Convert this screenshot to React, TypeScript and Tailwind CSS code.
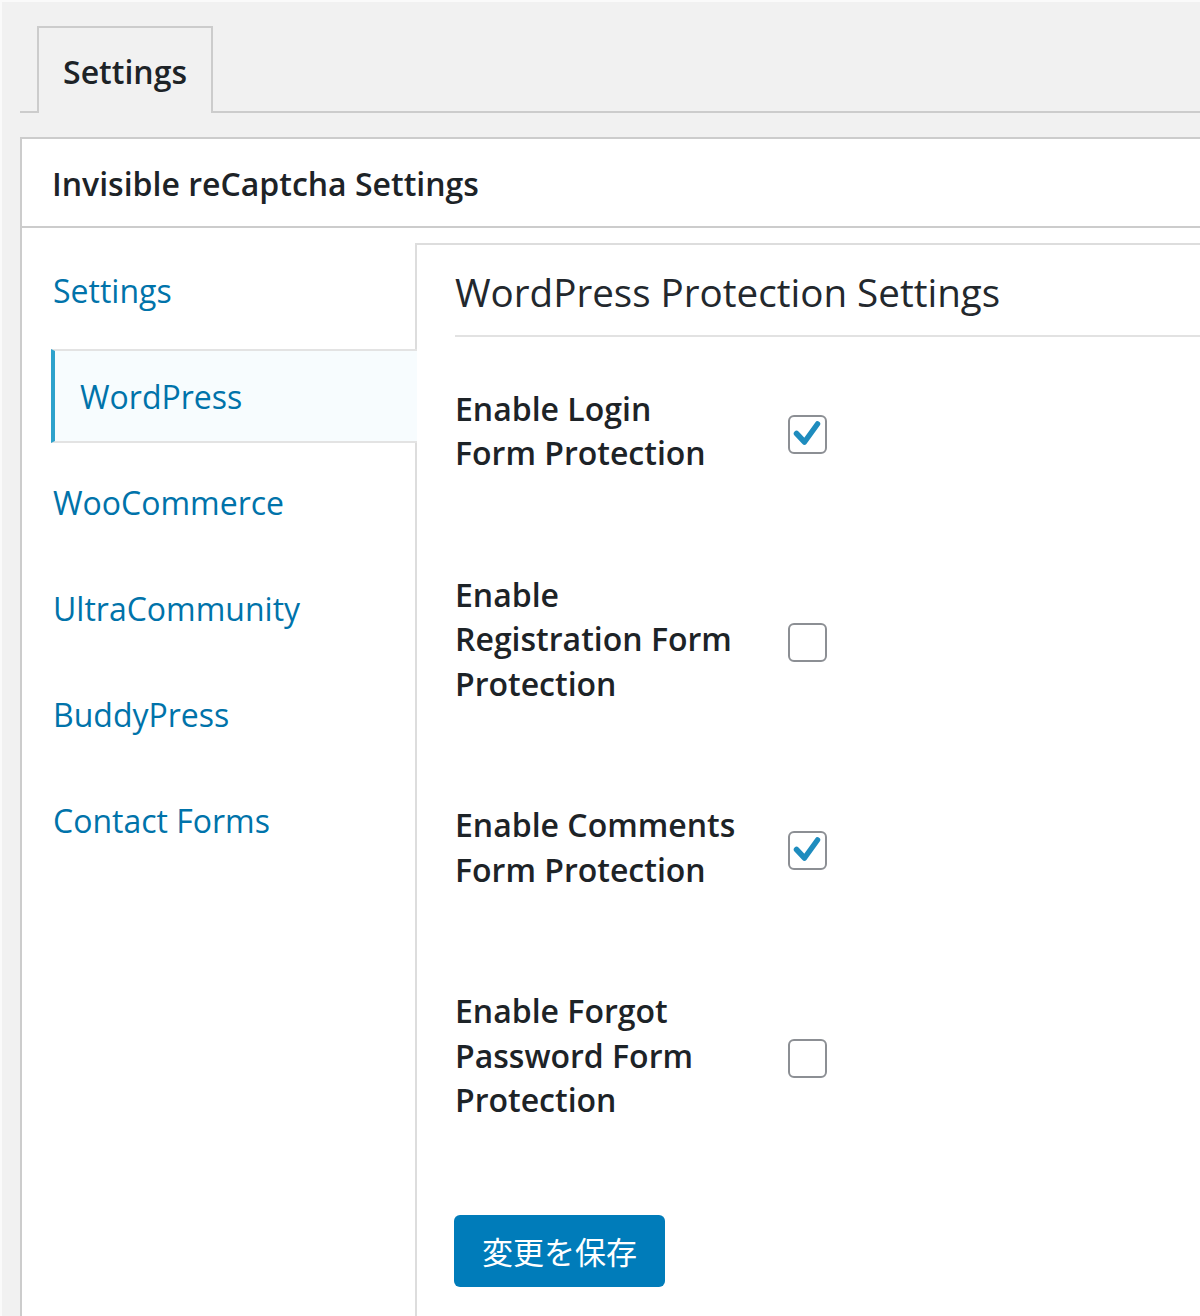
const navItems = [
  "Settings",
  "WordPress",
  "WooCommerce",
  "UltraCommunity",
  "BuddyPress",
  "Contact Forms",
];

const rows = [
  { label: "Enable Login Form Protection", checked: true },
  { label: "Enable Registration Form Protection", checked: false },
  { label: "Enable Comments Form Protection", checked: true },
  { label: "Enable Forgot Password Form Protection", checked: false },
];

function CheckBox({ checked }: { checked: boolean }) {
  return (
    <span className="mt-[6px] -ml-[1px] flex h-[39px] w-[39px] shrink-0 items-center justify-center rounded-[6px] border-2 border-[#8c8f94] bg-white">
      {checked && (
        <svg viewBox="0 0 39 39" className="h-[39px] w-[39px] -m-[2px]">
          <path
            d="M8.5 18.5 L16.5 27 L29.5 9"
            fill="none"
            stroke="#1e8cbe"
            strokeWidth="5.5"
            strokeLinecap="round"
            strokeLinejoin="round"
          />
        </svg>
      )}
    </span>
  );
}

export default function App() {
  return (
    <div className="min-h-[1316px] overflow-hidden border-l-2 border-t-2 border-[#fafafa] bg-[#f1f1f1] pl-[18px] pt-[24px] font-['Open_Sans','Noto_Sans',sans-serif] text-[#23282d]">
      {/* tabs */}
      <div className="flex items-end border-b-2 border-[#cccccc] pl-[17px]">
        <div className="-mb-[2px] flex h-[87px] w-[176px] items-center justify-center border-2 border-b-0 border-[#cccccc] bg-[#f1f1f1] pt-[2px] text-[32px] font-semibold text-[#1d2327]">
          Settings
        </div>
      </div>

      <div className="mt-[24px] border-l-2 border-t-2 border-[#cccccc] bg-white">
        <div className="flex h-[89px] items-center border-b-2 border-[#cccccc] pl-[30px] pt-[2px] text-[32px] font-semibold text-[#1d2327]">
          Invisible reCaptcha Settings
        </div>

        <div className="flex">
          {/* left nav */}
          <div className="w-[393px] shrink-0 pt-[15px]">
            <ul className="ml-[29px] flex flex-col gap-[12px]">
              {navItems.map((item) =>
                item === "WordPress" ? (
                  <li
                    key={item}
                    className="relative z-10 -mr-[2px] flex h-[94px] items-center border-y-2 border-l-4 border-[#e3e3e3] border-l-[#2ea2cc] bg-[#f7fcfe] pl-[25px] pt-[2px] text-[32px] text-[#0073aa]"
                  >
                    {item}
                  </li>
                ) : (
                  <li
                    key={item}
                    className="flex h-[94px] items-center pl-[2px] pt-[2px] text-[32px] text-[#0073aa]"
                  >
                    {item}
                  </li>
                )
              )}
            </ul>
          </div>

          {/* right panel */}
          <div className="min-h-[1080px] flex-1 mt-[15px] border-l-2 border-t-2 border-[#dddddd] pl-[38px]">
            <h2 className="border-b-2 border-[#e2e2e2] pb-[17px] pt-[21px] text-[38.6px] font-normal leading-[52px] text-[#23282d]">
              WordPress Protection Settings
            </h2>

            <div className="mt-[1px]">
              {rows.map((row) => (
                <div key={row.label} className="flex items-center py-[48.5px]">
                  <div className="w-[334px] shrink-0 pr-[52px] text-[32px] font-semibold leading-[44.5px] text-[#1d2327]">
                    {row.label}
                  </div>
                  <CheckBox checked={row.checked} />
                </div>
              ))}
            </div>

            <button className="-ml-[1px] mt-[44px] h-[72px] rounded-[6px] bg-[#007cba] px-[28px] font-['Noto_Sans_CJK_JP',sans-serif] text-[31px] text-white">
              変更を保存
            </button>
          </div>
        </div>
      </div>
    </div>
  );
}
